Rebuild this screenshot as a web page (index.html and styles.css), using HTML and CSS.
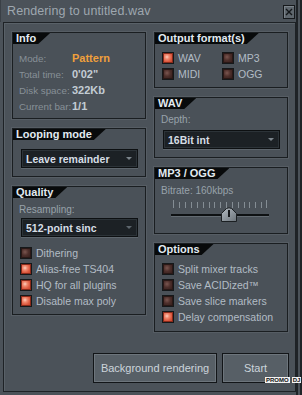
FILE: index.html
```html
<!DOCTYPE html>
<html lang="en">

<head>
    <meta charset="UTF-8">
    <meta name="viewport" content="width=device-width, initial-scale=1.0">
    <title>Rendering to untitled.wav</title>
    <link rel="stylesheet" href="styles.css">
</head>

<body>
    <div class="window">
        <header class="titlebar">
            <span class="title">Rendering to untitled.wav</span>
            <button class="close-btn" aria-label="Close">
                <svg width="10" height="10" viewBox="0 0 10 10">
                    <path d="M2 2 L8 8 M8 2 L2 8" stroke="#14171a" stroke-width="1.4" />
                </svg>
            </button>
        </header>

        <div class="frame">
            <div class="columns">
                <!-- left column -->
                <div class="column">
                    <section class="group group-info">
                        <h2 class="tab">Info</h2>
                        <div class="info-list">
                            <div class="info-row"><span class="info-label">Mode:</span><span class="info-value accent">Pattern</span></div>
                            <div class="info-row"><span class="info-label">Total time:</span><span class="info-value">0'02"</span></div>
                            <div class="info-row"><span class="info-label">Disk space:</span><span class="info-value">322Kb</span></div>
                            <div class="info-row"><span class="info-label">Current bar:</span><span class="info-value">1/1</span></div>
                        </div>
                    </section>

                    <section class="group group-looping">
                        <h2 class="tab">Looping mode</h2>
                        <div class="select select-looping">Leave remainder<span class="arrow"></span></div>
                    </section>

                    <section class="group group-quality">
                        <h2 class="tab">Quality</h2>
                        <p class="field-label">Resampling:</p>
                        <div class="select select-resampling">512-point sinc<span class="arrow dim"></span></div>
                        <ul class="checklist checklist-quality">
                            <li><span class="check"></span>Dithering</li>
                            <li><span class="check on"></span>Alias-free TS404</li>
                            <li><span class="check on"></span>HQ for all plugins</li>
                            <li><span class="check on"></span>Disable max poly</li>
                        </ul>
                    </section>
                </div>

                <!-- right column -->
                <div class="column">
                    <section class="group group-output">
                        <h2 class="tab">Output format(s)</h2>
                        <ul class="checklist checklist-formats">
                            <li><span class="check on"></span>WAV</li>
                            <li><span class="check"></span>MP3</li>
                            <li><span class="check"></span>MIDI</li>
                            <li><span class="check"></span>OGG</li>
                        </ul>
                    </section>

                    <section class="group group-wav">
                        <h2 class="tab">WAV</h2>
                        <p class="field-label">Depth:</p>
                        <div class="select select-depth">16Bit int<span class="arrow"></span></div>
                    </section>

                    <section class="group group-mp3">
                        <h2 class="tab">MP3 / OGG</h2>
                        <p class="field-label">Bitrate: 160kbps</p>
                        <svg class="slider" width="98" height="24" viewBox="0 0 98 24">
                            <defs>
                                <linearGradient id="knob" x1="0" y1="0" x2="1" y2="1">
                                    <stop offset="0" stop-color="#b4bcc3" />
                                    <stop offset="1" stop-color="#6a7279" />
                                </linearGradient>
                            </defs>
                            <g stroke="#848d94" stroke-width="1">
                                <path d="M2.5 1 V9 M95.5 1 V9" />
                                <path d="M8.5 3V9 M14.5 3V9 M20.5 3V9 M26.5 3V9 M32.5 3V9 M38.5 3V9 M43.5 3V9 M49.5 3V9 M55.5 3V9 M61.5 3V9 M67.5 3V9 M73.5 3V9 M78.5 3V9 M84.5 3V9 M90.5 3V9" />
                            </g>
                            <rect x="0" y="15" width="98" height="2" fill="#0e1113" />
                            <rect x="0" y="17" width="98" height="1" fill="#636b72" />
                            <path d="M50.5 22.5 V14.5 L55.5 9.5 Q58 8 60.5 9.5 L65.5 14.5 V22.5 Z" fill="url(#knob)" stroke="#1b1f22" />
                            <path d="M58 11 V18" stroke="#15181b" stroke-width="2" />
                        </svg>
                    </section>

                    <section class="group group-options">
                        <h2 class="tab">Options</h2>
                        <ul class="checklist">
                            <li><span class="check"></span>Split mixer tracks</li>
                            <li><span class="check"></span>Save ACIDized™</li>
                            <li><span class="check"></span>Save slice markers</li>
                            <li><span class="check on"></span>Delay compensation</li>
                        </ul>
                    </section>
                </div>
            </div>

            <div class="actions">
                <button class="btn btn-background">Background rendering</button>
                <button class="btn btn-start">Start</button>
            </div>
        </div>

        <div class="watermark"><span>PROMO</span><span>DJ</span></div>
    </div>
</body>

</html>
```

FILE: styles.css
```css
* {
    box-sizing: border-box;
}

body {
    margin: 0;
    background: #4b5259;
    font-family: 'Liberation Sans', Arial, sans-serif;
}

.window {
    position: relative;
    width: 302px;
    height: 395px;
    background: #4b5259;
    border-right: 6px double #1f2327;
    display: flex;
    flex-direction: column;
}

/* title bar */
.titlebar {
    height: 22px;
    display: flex;
    align-items: center;
    padding: 0 1px 0 6px;
    border-left: 1px solid #3a4046;
}

.title {
    font-size: 12.5px;
    color: #9ea7af;
    letter-spacing: 0.1px;
}

.close-btn {
    margin-left: auto;
    margin-top: 1px;
    width: 12px;
    height: 14px;
    padding: 0;
    background: #5f676e;
    border: 1px solid #16191c;
    box-shadow: inset 1px 1px 0 #7b838a;
    display: flex;
    align-items: center;
    justify-content: center;
}

/* main frame */
.frame {
    flex: 1;
    margin: 0 0 3px 3px;
    border: 1px solid #1e2226;
    box-shadow: inset 1px 1px 0 #596168;
    padding: 9px 0 8px 8px;
    display: flex;
    flex-direction: column;
}

.columns {
    display: grid;
    grid-template-columns: 134px 134px;
    column-gap: 8px;
}

.column {
    display: flex;
    flex-direction: column;
    gap: 9px;
}

/* group boxes */
.group {
    border: 1px solid #1a1e21;
    box-shadow: 0 0 0 1px #565d64;
    background: #4a5158;
}

.group-info { height: 87px; }
.group-looping { height: 49px; }
.group-quality { height: 129px; }
.group-output { height: 56px; }
.group-wav { height: 61px; }
.group-mp3 { height: 67px; }
.group-options { height: 89px; }

.tab {
    display: block;
    width: fit-content;
    height: 11px;
    margin: 0;
    padding: 0 14px 0 3px;
    background: #080a0b;
    color: #e2eaf1;
    font-size: 11px;
    font-weight: bold;
    line-height: 11px;
    clip-path: polygon(0 0, 100% 0, calc(100% - 12px) 100%, 0 100%);
}

/* info rows */
.info-list {
    margin-top: 6px;
    padding-left: 6px;
}

.info-row {
    display: flex;
    height: 16px;
    align-items: center;
}

.info-label {
    width: 53px;
    font-size: 9.8px;
    color: #879097;
}

.info-value {
    font-size: 11px;
    font-weight: bold;
    color: #c3ccd4;
}

.info-value.accent {
    color: #f0a03c;
}

/* labels and dropdowns */
.field-label {
    margin: 4px 0 0 6px;
    height: 16px;
    line-height: 16px;
    font-size: 10px;
    color: #98a2aa;
}

.group-wav .field-label {
    margin-top: 3px;
}

.select {
    height: 19px;
    margin: 0 7px 0 8px;
    padding: 0 5px 0 4px;
    background: #1c2125;
    border: 1px solid #0d1012;
    box-shadow: inset 0 0 0 1px #2c3338, 0 1px 0 #5d656c;
    color: #d6dee5;
    font-size: 10.5px;
    font-weight: bold;
    display: flex;
    align-items: center;
    justify-content: space-between;
}

.select-looping {
    margin-top: 9px;
}

.select-depth {
    margin-top: 2px;
}

.arrow {
    width: 0;
    height: 0;
    border-left: 3px solid transparent;
    border-right: 3px solid transparent;
    border-top: 3px solid #7c858c;
}

.arrow.dim {
    border-top-color: #5d666d;
}

/* checkboxes */
.checklist {
    list-style: none;
    margin: 6px 0 0;
    padding: 0 0 0 7px;
}

.checklist li {
    display: flex;
    align-items: center;
    gap: 4px;
    height: 16px;
    font-size: 10.5px;
    color: #b2bcc5;
}

.checklist-quality {
    margin-top: 8px;
}

.checklist-formats {
    display: grid;
    grid-template-columns: 60px auto;
}

.check {
    width: 12px;
    height: 12px;
    flex: none;
    border: 1px solid #15181a;
    box-shadow: inset 0 0 0 1px #2a1816;
    background: radial-gradient(circle at 40% 40%, #7a5650 0, #4d2f2b 40%, #2b1917 100%);
}

.check.on {
    box-shadow: inset 0 0 0 1px #8a2a1a;
    background: radial-gradient(circle at 40% 40%, #fbd0c0 0, #f08a70 25%, #dc5a40 55%, #b23a22 100%);
}

/* bitrate slider */
.slider {
    display: block;
    margin-left: 16px;
}

/* bottom buttons */
.actions {
    margin-top: auto;
    display: flex;
    justify-content: flex-end;
    gap: 5px;
    padding-right: 6px;
}

.btn {
    height: 30px;
    padding: 0;
    background: #575f66;
    border: 1px solid #121518;
    box-shadow: inset 0 0 0 1px #6d757c;
    color: #ccd4db;
    font-family: 'Liberation Sans', Arial, sans-serif;
    font-size: 11px;
}

.btn-background {
    width: 124px;
}

.btn-start {
    width: 67px;
}

/* watermark over the corner */
.watermark {
    position: absolute;
    left: 265px;
    top: 377px;
    display: flex;
    gap: 2px;
}

.watermark span {
    background: #f2f2f2;
    color: #111;
    font-size: 6px;
    font-weight: bold;
    line-height: 6px;
    padding: 0 1px;
}
```
